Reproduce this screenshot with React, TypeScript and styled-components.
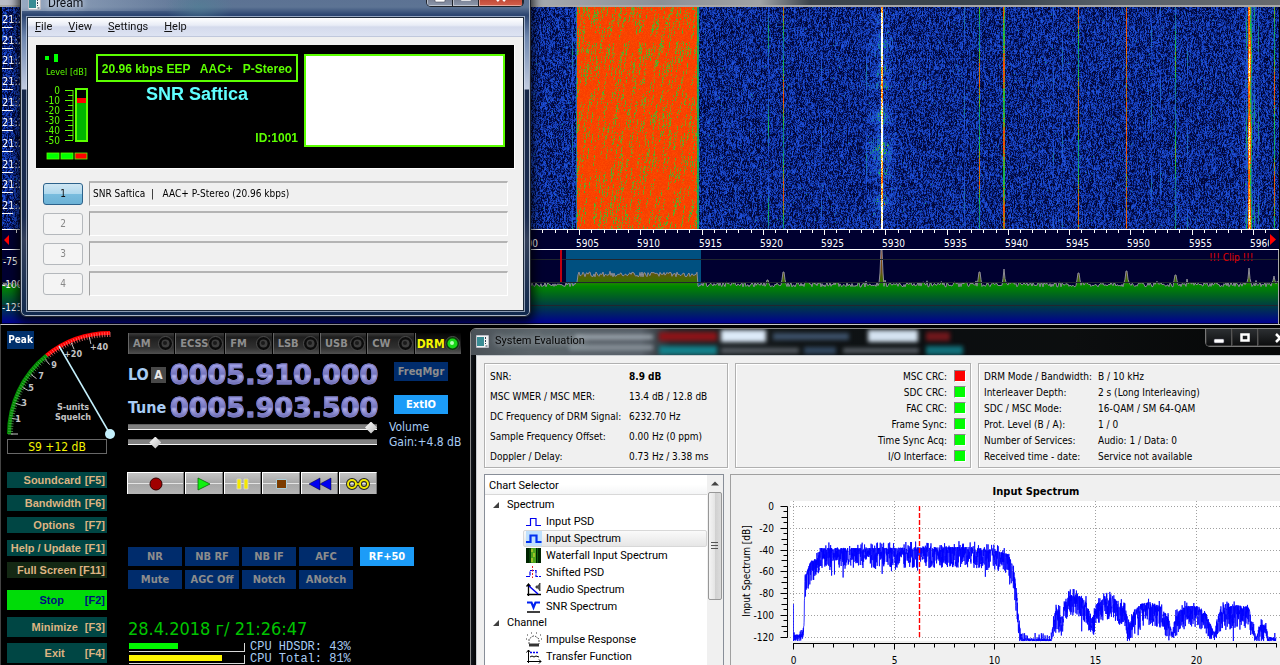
import React, { useLayoutEffect, useRef } from "react";
import styled, { createGlobalStyle, css } from "styled-components";

/* ---------- shared values ---------- */

const ui = `"DejaVu Sans Condensed", "Noto Sans", sans-serif`;
const segoe = `Roboto, "Open Sans", sans-serif`;
const arial = `"Liberation Sans", Arial, sans-serif`;
const lime = "#5cff00";

const GlobalStyle = createGlobalStyle`
  *, *::before, *::after { box-sizing: border-box; }
  html, body { margin: 0; background: #000; }
  body { font-family: ${ui}; font-size: 11px; overflow: hidden; }
  button { font: inherit; padding: 0; margin: 0; border: 0; white-space: nowrap; }
  dl, dd, dt, ul, h2, p { margin: 0; padding: 0; font: inherit; }
  ul { list-style: none; }
  svg { display: block; }
`;

function makeRandom(seed: number) {
  let a = seed;
  return () => {
    a = (a + 0x6d2b79f5) | 0;
    let t = Math.imul(a ^ (a >>> 15), 1 | a);
    t = (t + Math.imul(t ^ (t >>> 7), 61 | t)) ^ t;
    return ((t ^ (t >>> 14)) >>> 0) / 4294967296;
  };
}

/* ---------- desktop ---------- */

const Desktop = styled.main`
  position: relative;
  height: 100vh;
  min-height: 640px;
  overflow: hidden;
  background: #000;
`;

/* ---------- HDSDR: waterfall and spectrum ---------- */

const Sdr = styled.section`
  display: flex;
  flex-direction: column;
  padding: 0 1px 0 2px;
`;

const SdrCaption = styled.header`
  height: 7px;
  margin: 0 -1px 0 -2px;
  border-bottom: 2px solid #a8a8a8;
  background: linear-gradient(90deg, #b9bcc6 0, #a4a8ae 540px, #8c9095 660px, #a0a3a6 760px, #3c444c 810px, #39444d 1000px, #59616a 1120px, #666a6e 100%);
`;

const WaterfallArea = styled.div`
  position: relative;
  height: 222px;
  background: #000030;
`;

const WaterfallCanvas = styled.canvas`
  display: block;
  width: 100%;
  height: 100%;
`;

const TimeMarks = styled.ul`
  position: absolute;
  inset: 5px auto 15px 0;
  display: flex;
  flex-direction: column;
  justify-content: space-between;
  color: #fff;
  font-size: 11px;
  line-height: 15px;
  li::after { content: ""; display: block; width: 11px; height: 1px; background: #fff; }
`;

const palette: [number, number, number, number][] = [
  [0, 0, 0, 34],
  [0.14, 2, 10, 66],
  [0.3, 20, 60, 180],
  [0.42, 34, 84, 226],
  [0.55, 20, 130, 130],
  [0.66, 20, 200, 60],
  [0.75, 160, 140, 20],
  [0.82, 250, 60, 0],
  [0.9, 255, 120, 0],
  [0.96, 255, 235, 90],
  [1, 255, 255, 255],
];

function paletteColor(v: number): [number, number, number] {
  const t = Math.max(0, Math.min(1, v));
  for (let i = 1; i < palette.length; i++) {
    if (t <= palette[i][0]) {
      const a = palette[i - 1];
      const b = palette[i];
      const k = (t - a[0]) / (b[0] - a[0]);
      return [a[1] + (b[1] - a[1]) * k, a[2] + (b[2] - a[2]) * k, a[3] + (b[3] - a[3]) * k];
    }
  }
  return [255, 255, 255];
}

/* x position, strength, width, depth of slow fading */
const carriers: [number, number, number, number][] = [
  [570, 0.36, 1, 0.16], [766, 0.42, 1, 0.18], [781, 0.68, 1, 0.14], [864, 0.32, 1, 0.18],
  [879, 0.97, 2, 0.06], [819, 0.22, 1, 0.24], [962, 0.34, 1, 0.16],
  [977, 0.68, 1, 0.13], [1001, 0.74, 1, 0.08], [1002, 0.72, 1, 0.08], [1051, 0.24, 1, 0.22],
  [1060, 0.28, 1, 0.2], [1076, 0.7, 1, 0.12], [1124, 0.81, 1, 0.05], [1149, 0.26, 1, 0.24],
  [1158, 0.26, 1, 0.2], [1173, 0.58, 1, 0.1], [1185, 0.26, 1, 0.24],
  [1244, 0.44, 1, 0.16], [1246, 0.84, 1, 0.06], [1247, 0.92, 1, 0.05], [1248, 0.78, 1, 0.1],
  [1249, 0.58, 1, 0.08], [1256, 0.38, 1, 0.16], [1252, 0.34, 1, 0.22], [1272, 0.7, 1, 0.12],
];

function paintWaterfall(canvas: HTMLCanvasElement) {
  const w = canvas.clientWidth;
  const h = canvas.clientHeight;
  canvas.width = w;
  canvas.height = h;
  const ctx = canvas.getContext("2d");
  if (!ctx) return;
  const rnd = makeRandom(5910);
  const img = ctx.createImageData(w, h);
  const prev = new Float32Array(w).fill(0.2);
  const hash = (a: number, b: number) => {
    const s = Math.sin(a * 127.1 + b * 311.7) * 43758.5453;
    return s - Math.floor(s);
  };
  /* rows where the strong station is modulated */
  const bursts: [number, number, number][] = [[12, 8, 0.5], [38, 12, 0.9], [62, 8, 0.7], [78, 5, 0.9], [108, 10, 1], [142, 14, 1.2], [164, 8, 0.9], [194, 9, 0.7]];
  for (let y = 0; y < h; y++) {
    let burst = 0.1;
    for (const [by, spread, power] of bursts) burst = Math.max(burst, power * (1 - Math.abs(y - by) / (spread * 1.6)));
    for (let x = 0; x < w; x++) {
      const r = rnd();
      let v = prev[x] * 0.35 + r * 0.3;
      prev[x] = v;
      if (rnd() < 0.012) v += 0.16;
      const d = Math.abs(x - 879.5);
      if (d < 15) {
        const speck = hash(x, Math.floor(y / 3));
        v += (1 - d / 16) * burst * (0.14 + 0.5 * speck) * (0.4 + 0.6 * rnd());
      }
      const d2 = Math.abs(x - 1247);
      if (d2 < 9) v += (1 - d2 / 9) * 0.25 * rnd();
      if (x >= 575 && x < 695) {
        const shifted = x + y / 7;
        const col = Math.floor(shifted);
        const streak = hash(col, Math.floor((y + hash(col, 3) * 12) / 12)) < 0.26;
        v = streak && rnd() < 0.66 ? 0.68 + rnd() * 0.09 : 0.812 + rnd() * 0.03;
      } else if (x >= 695 && x < 697) {
        v = 0.56 + rnd() * 0.1;
      } else if (x === 574) {
        v = 0.4 + rnd() * 0.22;
      }
      for (const [cx, strength, width, fade] of carriers) {
        if (x >= cx && x < cx + width) {
          v = Math.max(v, strength + Math.sin(y / (11 + (cx % 7)) + cx) * fade + (rnd() - 0.5) * 0.14);
        }
      }
      const c = paletteColor(v);
      const i = (y * w + x) * 4;
      img.data[i] = c[0];
      img.data[i + 1] = c[1];
      img.data[i + 2] = c[2];
      img.data[i + 3] = 255;
    }
  }
  ctx.putImageData(img, 0, 0);
}

function Waterfall() {
  const ref = useRef<HTMLCanvasElement>(null);
  useLayoutEffect(() => {
    if (ref.current) paintWaterfall(ref.current);
  }, []);
  return (
    <WaterfallArea>
      <WaterfallCanvas ref={ref} />
      <TimeMarks>
        {Array.from({ length: 10 }, (_, i) => (
          <li key={i}>21:2</li>
        ))}
      </TimeMarks>
    </WaterfallArea>
  );
}

const ScaleBar = styled.div`
  height: 21px;
  border-top: 1px solid #fff;
  border-bottom: 1px solid #fff;
  background: #000030;
  font-size: 11px;
`;

const scaleStart = 578;

function FrequencyScale() {
  const ticks = [];
  for (let f = 5859; f <= 5961; f++) ticks.push(f);
  const labels = [];
  for (let f = 5900; f <= 5960; f += 5) labels.push(f);
  return (
    <ScaleBar>
      <svg width="100%" height="19">
        {ticks.map((f) => (
          <rect key={f} x={Math.round(scaleStart + (f - 5905) * 12.25) - 1} y="0" width="1" height={f % 5 ? 3 : 5} fill="#fff" />
        ))}
        {labels.map((f) => (
          <text key={f} x={Math.round(scaleStart + (f - 5905) * 12.25) - 4} y="17" fill="#fff" fontSize="10" fontFamily={ui}>
            {f}
          </text>
        ))}
        <rect x="1267" y="4" width="12" height="15" fill="#000030" />
        <path d="M7 5v10l-5-5zM1268 4v11l6-5.500z" fill="#f00" />
      </svg>
    </ScaleBar>
  );
}

const SpectrumBox = styled.div`
  height: 74px;
  border-right: 1px solid #aaa;
  background: #000030;
`;

const spectrumPeaks: [number, number][] = [
  [781.5, 272], [879, 250], [880, 250], [977.5, 272], [1002, 269], [1076.5, 273], [1124.500, 271],
  [1173.5, 275], [1185, 279], [1247, 268], [1272, 276], [765.5, 280], [864, 281], [883, 280],
];

function spectrumTrace() {
  const rnd = makeRandom(77);
  let d = "";
  for (let x = 0; x <= 1276; x++) {
    const inBand = x >= 576 && x <= 695;
    let y = (inBand ? 25.5 : 35.5) + (rnd() - 0.5) * 5 - 1;
    if (rnd() < 0.04) y -= 1.5;
    for (const [px, top] of spectrumPeaks) {
      const dist = Math.abs(px - x);
      if (dist < 0.6) y = top - 250;
      else if (dist < 1.7 && top < 277) y = Math.min(y, (top - 250) * 0.3 + 23);
    }
    d += `L${x} ${y.toFixed(1)}`;
  }
  return d.slice(1);
}

function RfSpectrum() {
  const trace = spectrumTrace();
  return (
    <SpectrumBox>
      <svg width="100%" height="73">
        <defs>
          <linearGradient id="rfFill" x1="0" y1="0" x2="0" y2="73" gradientUnits="userSpaceOnUse">
            <stop offset="0" stopColor="#a04010" />
            <stop offset="0.3" stopColor="#6c5010" />
            <stop offset="0.42" stopColor="#3c6c00" />
            <stop offset="0.47" stopColor="#108a00" />
            <stop offset="0.5" stopColor="#008600" />
            <stop offset="0.75" stopColor="#004040" />
            <stop offset="1" stopColor="#000090" />
          </linearGradient>
        </defs>
        <rect x="564" y="0" width="135" height="36" fill="#005080" />
        <path d={`M0 73L${trace}L1276 73Z`} fill="url(#rfFill)" />
        <path d={`M${trace}`} fill="none" stroke="#8c8c98" strokeWidth="1" />
        <path d="M0 9.500H1278M0 32.500H1278M0 55.500H1278" stroke="#20262e" strokeWidth="1" />
        <rect x="558" y="0" width="2" height="32" fill="#c00010" />
        <g fontFamily={ui} fontSize="10" fill="#fff">
          <text x="1" y="15">-75</text>
          <text x="0" y="38">-100</text>
          <text x="0" y="61">-125</text>
        </g>
        <text x="1207" y="11" fontFamily={ui} fontSize="10" fill="#e00000">!!! Clip !!!</text>
      </svg>
    </SpectrumBox>
  );
}

/* ---------- HDSDR: control panel ---------- */

const ControlDeck = styled.section`
  display: grid;
  grid-template-columns: 120px 334px;
  padding: 2px 0 0 7px;
  border-top: 1px solid #c8c8c8;
  border-left: 1px solid #444;
  background: #000;
`;

const MeterColumn = styled.div`
  display: flex;
  flex-direction: column;
  margin-left: -1px;
`;

const MeterWrap = styled.div`
  position: relative;
`;

const PeakButton = styled.button`
  position: absolute;
  left: 0;
  top: 4px;
  width: 27px;
  height: 18px;
  background: #00306c;
  color: #fff;
  font: bold 10px/18px ${ui};
`;

const SReading = styled.output`
  width: 100px;
  height: 15px;
  border: 1px solid #686868;
  color: #f4f400;
  font: 12px/14px ${ui};
  text-align: center;
`;

const FnStack = styled.div<{ $tall?: boolean }>`
  display: flex;
  flex-direction: column;
  justify-content: space-between;
  width: 100px;
  height: ${(p) => (p.$tall ? 73 : 106)}px;
  margin-top: ${(p) => (p.$tall ? 12 : 18)}px;
`;

const FnButton = styled.button<{ $bg?: string; $fg?: string; $tall?: boolean }>`
  display: flex;
  justify-content: flex-end;
  align-items: center;
  height: ${(p) => (p.$tall ? 20 : 16)}px;
  padding-right: 2px;
  background: ${(p) => p.$bg ?? "#004644"};
  color: ${(p) => p.$fg ?? "#dcb482"};
  font: bold 11px/14px ${arial};
  span { flex: 1; text-align: ${(p) => (p.$tall ? "center" : "right")}; }
  kbd { font: inherit; min-width: 24px; text-align: right; }
`;

const meterLabels: [number, number, string][] = [
  [11, 95, "1"], [17, 79, "3"], [24, 64, "5"], [34, 52, "7"], [47, 41, "9"], [66, 30, "+20"], [92, 23, "+40"],
];

function arcPoint(angle: number, r: number) {
  const a = (angle * Math.PI) / 180;
  return `${(103 - Math.cos(a) * r).toFixed(1)} ${(107 - Math.sin(a) * r).toFixed(1)}`;
}

function SMeter() {
  let green = "";
  let red = "";
  for (let a = 0; a <= 90; a += 1.5) {
    const seg = `M${arcPoint(a, 102)}L${arcPoint(a, 97)}`;
    if (a < 52) green += seg;
    else red += seg;
  }
  let major = "";
  for (const a of [0, 9, 18, 28, 37, 49, 60, 67, 78]) major += `M${arcPoint(a, 99)}L${arcPoint(a, 92)}`;
  return (
    <svg width="116" height="112">
      <path d={`M${arcPoint(0, 101)}A101 101 0 0 1 ${arcPoint(51, 101)}`} fill="none" stroke="#008c00" strokeWidth="4" />
      <path d={`M${arcPoint(51, 101)}A101 101 0 0 1 ${arcPoint(90, 101)}`} fill="none" stroke="#ff0000" strokeWidth="4" />
      <path d={green} stroke="#50a850" strokeWidth="0.800" />
      <path d={red} stroke="#ff7070" strokeWidth="0.800" />
      <path d={major} stroke="#c0c0c0" strokeWidth="1" />
      <g fontFamily={ui} fontSize="9" fontWeight="bold" fill="#c4c4c4" textAnchor="middle">
        {meterLabels.map(([x, y, t]) => (
          <text key={t} x={x} y={y}>{t}</text>
        ))}
        <text x="66" y="83">S-units</text>
        <text x="66" y="93">Squelch</text>
      </g>
      <path d="M52 19L103 107" stroke="#c4f0fc" strokeWidth="1.500" />
      <circle cx="103" cy="107" r="5" fill="#c4f0fc" />
    </svg>
  );
}

const RadioColumn = styled.div`
  display: flex;
  flex-direction: column;
  padding-top: 6px;
`;

const ModeBar = styled.div`
  display: grid;
  grid-template-columns: repeat(7, 1fr);
  height: 21px;
`;

const ModeButton = styled.button<{ $on?: boolean }>`
  display: flex;
  align-items: center;
  justify-content: space-between;
  padding: 0 1px 0 ${(p) => (p.$on ? 1 : 4)}px;
  border-right: 1px solid #000;
  border-left: 1px solid #666;
  background: ${(p) => (p.$on ? "linear-gradient(#050505, #222 60%, #5a5a5a)" : "linear-gradient(#3c3c3c, #1e1e1e 20%, #303030 70%, #505050)")};
  color: ${(p) => (p.$on ? "#f6f600" : "#8e8e8e")};
  font: bold ${(p) => (p.$on ? 12 : 11)}px/18px ${ui};
`;

function Led({ on }: { on?: boolean }) {
  return (
    <svg width="15" height="15">
      <circle cx="7.500" cy="7.500" r="7" fill={on ? "#0a3c0a" : "#0c0c0c"} stroke="#4c4c4c" />
      <circle cx="7.500" cy="7.500" r={on ? 5 : 4} fill={on ? "#18d818" : "#3e3e3e"} />
      <circle cx="7" cy="7" r="2" fill={on ? "#b4ffb4" : "#1a1a1a"} />
    </svg>
  );
}

const FreqRow = styled.div`
  display: grid;
  grid-template-columns: 42px 224px 54px;
  align-items: center;
  height: 25px;
  margin-top: 8px;
`;

const FreqLabel = styled.div`
  display: flex;
  align-items: center;
  gap: 2px;
  color: #a8ccf4;
  font: bold 16px/22px ${ui};
`;

const VfoBox = styled.button`
  width: 15px;
  height: 16px;
  background: #484848;
  color: #e8e8e8;
  font: bold 12px/16px ${ui};
`;

const Digits = styled.div`
  font: bold 27px/25px "DejaVu Sans", sans-serif;
  background: linear-gradient(#a0a0e8 3px, #7474bc 12px, #b0b0ec 14px, #6868b0 22px);
  background-clip: text;
  -webkit-background-clip: text;
  -webkit-text-stroke: 1px #7c7cc0;
  color: transparent;
`;

const PanelButton = styled.button<{ $on?: boolean }>`
  align-self: start;
  height: 19px;
  background: ${(p) => (p.$on ? "#1c9cf8" : "#002c6c")};
  color: ${(p) => (p.$on ? "#fff" : "#8c8c8c")};
  font: bold 11px/19px ${ui};
  text-align: center;
`;

const SliderBlock = styled.div`
  display: grid;
  grid-template-columns: 249px 1fr;
  column-gap: 12px;
  align-items: center;
  color: #a8ccf4;
  font: 12px/15px ${ui};
`;

const Slider = styled.input`
  appearance: none;
  width: 100%;
  height: 15px;
  margin: 0;
  background: linear-gradient(transparent 4px, #484848 4px, #808080 5px, #808080 9px, #f4f4f4 9px, #f4f4f4 10px, transparent 10px);
  &::-webkit-slider-thumb {
    appearance: none;
    width: 12px;
    height: 12px;
    background: linear-gradient(135deg, #fff, #b8b8b8);
    clip-path: polygon(50% 0, 100% 50%, 50% 100%, 0 50%);
  }
`;

const Transport = styled.div`
  display: grid;
  grid-template-columns: 57px repeat(5, 1fr);
  gap: 1px;
  width: 250px;
  margin-top: 22px;
  margin-left: -1px;
`;

const TransportButton = styled.button`
  display: flex;
  align-items: center;
  justify-content: center;
  height: 22px;
  border-left: 1px solid #fff;
  border-top: 1px solid #fff;
  border-right: 1px solid #777;
  background: linear-gradient(#c4c4c4, #a8a8a8 46%, #e4e4e4 50%, #a8a8a8 54%, #b4b4b4);
`;

const DspGrid = styled.div`
  display: grid;
  grid-template-columns: repeat(4, 54px) 54px;
  gap: 4px 3px;
  margin-top: 53px;
  & > :nth-child(5) { margin-left: 4px; margin-right: -4px; }
`;

const Clock = styled.time`
  margin-top: 27px;
  color: #00c400;
  font: 18px/25px ${ui};
`;

const CpuRow = styled.div`
  display: grid;
  grid-template-columns: 117px 1fr;
  align-items: center;
  gap: 5px;
  height: 12px;
  color: #a8ccf4;
  font: 12px/12px "Liberation Mono", monospace;
`;

const CpuTrack = styled.div`
  height: 9px;
  margin-left: 1px;
  border-right: 1px solid #d8d8d8;
  border-bottom: 1px solid #d8d8d8;
`;

const CpuFill = styled.div<{ $color: string }>`
  height: 6px;
  background: ${(p) => p.$color};
`;

const modes = ["AM", "ECSS", "FM", "LSB", "USB", "CW", "DRM"];
const dspButtons = ["NR", "NB RF", "NB IF", "AFC", "RF+50", "Mute", "AGC Off", "Notch", "ANotch"];

const transportIcons: [string, React.ReactNode][] = [
  ["Record", <circle key="r" cx="12" cy="9" r="6" fill="#a00000" stroke="#300" />],
  ["Play", <path key="p" d="M6 3v12l12-6z" fill="#10f010" stroke="#0a6a0a" strokeWidth="0.800" />],
  ["Pause", <path key="u" d="M7 4h4v10H7zM14 4h4v10h-4z" fill="#f4e800" stroke="#d8d8d8" strokeWidth="0.800" />],
  ["Stop playback", <path key="s" d="M7.500 4.500h10v9h-10z" fill="#7c3c00" stroke="#aaccd8" />],
  ["Rewind", <path key="w" d="M12 3v12L1 9zM23 3v12L12 9z" fill="#0000f0" stroke="#002" strokeWidth="0.500" />],
  ["Loop", (
    <g key="l" fill="none">
      <path d="M9 9h6" stroke="#222" strokeWidth="3.500" />
      <circle cx="6" cy="9" r="4" stroke="#222" strokeWidth="4" />
      <circle cx="18" cy="9" r="4" stroke="#222" strokeWidth="4" />
      <circle cx="6" cy="9" r="4" stroke="#f0e800" strokeWidth="2" />
      <circle cx="18" cy="9" r="4" stroke="#f0e800" strokeWidth="2" />
      <path d="M9 9h6" stroke="#f0e800" strokeWidth="1.500" />
    </g>
  )],
];

function Controls() {
  return (
    <ControlDeck>
      <MeterColumn>
        <MeterWrap>
          <SMeter />
          <PeakButton>Peak</PeakButton>
        </MeterWrap>
        <SReading>S9 +12 dB</SReading>
        <FnStack>
          <FnButton><span>Soundcard</span><kbd>[F5]</kbd></FnButton>
          <FnButton><span>Bandwidth</span><kbd>[F6]</kbd></FnButton>
          <FnButton><span>Options &nbsp;</span><kbd>[F7]</kbd></FnButton>
          <FnButton><span>Help / Update</span><kbd>[F1]</kbd></FnButton>
          <FnButton $bg="#142814"><span>Full Screen</span><kbd>&nbsp;[F11]</kbd></FnButton>
        </FnStack>
        <FnStack $tall>
          <FnButton $tall $bg="#00dc08" $fg="#00107c"><span>&nbsp; &nbsp; &nbsp;Stop</span><kbd>[F2]</kbd></FnButton>
          <FnButton $tall><span>&nbsp; &nbsp; &nbsp; &nbsp;Minimize</span><kbd>[F3]</kbd></FnButton>
          <FnButton $tall><span>&nbsp; &nbsp; &nbsp; &nbsp;Exit</span><kbd>[F4]</kbd></FnButton>
        </FnStack>
      </MeterColumn>
      <RadioColumn>
        <ModeBar>
          {modes.map((m) => (
            <ModeButton key={m} $on={m === "DRM"} aria-pressed={m === "DRM"}>
              {m}
              <Led on={m === "DRM"} />
            </ModeButton>
          ))}
        </ModeBar>
        <FreqRow>
          <FreqLabel>LO<VfoBox>A</VfoBox></FreqLabel>
          <Digits>0005.910.000</Digits>
          <PanelButton>FreqMgr</PanelButton>
        </FreqRow>
        <FreqRow>
          <FreqLabel>Tune</FreqLabel>
          <Digits>0005.903.500</Digits>
          <PanelButton $on>ExtIO</PanelButton>
        </FreqRow>
        <SliderBlock>
          <Slider id="volume" type="range" min="0" max="100" defaultValue="100" />
          <label htmlFor="volume">Volume</label>
          <Slider id="gain" type="range" min="0" max="100" defaultValue="9" />
          <label htmlFor="gain">Gain:+4.8 dB</label>
        </SliderBlock>
        <Transport>
          {transportIcons.map(([name, icon]) => (
            <TransportButton key={name} aria-label={name}>
              <svg width="24" height="18">{icon}</svg>
            </TransportButton>
          ))}
        </Transport>
        <DspGrid>
          {dspButtons.map((b) => (
            <PanelButton key={b} $on={b === "RF+50"}>{b}</PanelButton>
          ))}
        </DspGrid>
        <Clock>28.4.2018 г/ 21:26:47</Clock>
        <CpuRow>
          <CpuTrack><CpuFill $color="#00f800" style={{ width: "43%" }} /></CpuTrack>
          <span>CPU HDSDR: 43%</span>
        </CpuRow>
        <CpuRow>
          <CpuTrack><CpuFill $color="#fcf400" style={{ width: "81%" }} /></CpuTrack>
          <span>CPU Total: 81%</span>
        </CpuRow>
      </RadioColumn>
    </ControlDeck>
  );
}

/* ---------- window chrome ---------- */

const AppIcon = () => (
  <svg width="13" height="13">
    <rect width="13" height="13" fill="#f4f4f4" stroke="#889" />
    <rect x="1" y="2" width="7" height="9" fill="#3a8c94" />
    <path d="M9.500 2v7M9.500 11h2" stroke="#345" strokeDasharray="2 1" />
  </svg>
);

const CaptionButtons = styled.div<{ $dark?: boolean }>`
  display: flex;
  margin-left: auto;
  border: 1px solid ${(p) => (p.$dark ? "#777" : "#20242c")};
  border-top: 0;
  border-radius: 0 0 5px 5px;
  overflow: hidden;
`;

const CaptionButton = styled.button<{ $close?: boolean; $dark?: boolean }>`
  display: flex;
  align-items: center;
  justify-content: center;
  width: ${(p) => (p.$close ? 44 : 26)}px;
  border-right: 1px solid ${(p) => (p.$dark ? "#555" : "#20242c")};
  box-shadow: inset 1px -1px 0 ${(p) => (p.$dark ? "#333" : "rgba(255,255,255,.45)")};
  background: ${(p) => (p.$dark ? "linear-gradient(#2c2f32, #0b0c0d)" : p.$close ? "linear-gradient(#9c2010, #d4604c)" : "linear-gradient(#556, #8c98ac)")};
`;

function WindowButtons({ dark }: { dark?: boolean }) {
  return (
    <CaptionButtons $dark={dark}>
      <CaptionButton $dark={dark} aria-label="Minimize">
        <svg width="12" height="12"><rect x="1" y="7" width="10" height="4" rx="1" fill="#fff" stroke="#445" strokeWidth="0.600" /></svg>
      </CaptionButton>
      <CaptionButton $dark={dark} aria-label="Maximize">
        <svg width="12" height="12"><rect x="2.500" y="2.500" width="7" height="6" fill="none" stroke="#fff" strokeWidth="2.500" /></svg>
      </CaptionButton>
      <CaptionButton $dark={dark} $close aria-label="Close">
        <svg width="12" height="12"><path d="M2 2l8 8M10 2l-8 8" stroke="#fff" strokeWidth="2.500" /></svg>
      </CaptionButton>
    </CaptionButtons>
  );
}

/* ---------- Dream window ---------- */

const DreamWindow = styled.section`
  position: absolute;
  left: 20px;
  top: -14px;
  width: 511px;
  padding: 0 6px 5px;
  border: 1px solid #20242c;
  border-radius: 6px;
  box-shadow: inset 0 0 0 1px #aab4c4, 0 3px 10px 3px rgba(0, 0, 0, 0.75);
  background:
    radial-gradient(ellipse 34px 20px at 178px 20px, rgba(80, 130, 150, 0.6), transparent),
    linear-gradient(90deg, rgba(210, 222, 238, 0.5), transparent 180px) 0 0 / 100% 24px no-repeat,
    linear-gradient(#5b6f92 0, #5d7494 20px, #2b4470 28px, #6d86ae 50px, #c2cce0 102px, #182848 103px, #1a2c50 230px, #33405a 253px, #10284c 100%);
`;

const DreamCaption = styled.header`
  display: flex;
  height: 30px;
  padding: 0 0 10px 1px;
  align-items: stretch;
  h2 {
    display: flex;
    align-items: center;
    gap: 7px;
    height: 18px;
    margin-top: 7px;
    color: #0c1018;
    font: 12px/18px ${segoe};
    text-shadow: 0 0 5px #dfe7f2, 0 0 8px #dfe7f2;
  }
`;

const DreamClient = styled.div`
  border: 1px solid #1c2838;
  outline: 1px solid rgba(220, 230, 245, 0.6);
  background: #f0f0f0;
`;

const MenuBar = styled.nav`
  display: flex;
  gap: 16px;
  height: 19px;
  padding-left: 7px;
  border-bottom: 1px solid #c0c8dc;
  background: linear-gradient(#fff, #e8ecf6 40%, #d4daec 50%, #dde3f2);
  button { background: none; color: #111; font: 11px/18px ${segoe}; }
`;

const DreamBody = styled.div`
  padding: 8px 8px 14px;
`;

const Display = styled.div`
  display: grid;
  grid-template-columns: 44px 202px 1fr;
  column-gap: 6px;
  height: 124px;
  padding: 9px 9px 0 10px;
  border-right: 1px solid #fff;
  border-bottom: 1px solid #fff;
  background: #000;
  color: ${lime};
  font-family: ${arial};
`;

const StationInfo = styled.div`
  display: flex;
  flex-direction: column;
  height: 93px;
`;

const Bitrate = styled.p`
  height: 28px;
  border: 2px solid ${lime};
  font: bold 12px/26px ${arial};
  text-align: center;
  white-space: pre;
`;

const StationName = styled.p`
  color: #60ffff;
  font: bold 18px/24px ${arial};
  text-align: center;
`;

const StationId = styled.p`
  margin-top: auto;
  font: bold 12px/18px ${arial};
  text-align: right;
`;

const MessageBox = styled.div`
  height: 93px;
  border: 2px solid ${lime};
  background: #fff;
`;

function LevelMeter() {
  const labels = ["0", "-10", "-20", "-30", "-40", "-50"];
  let ticks = "M27 36V86";
  for (let i = 0; i <= 10; i++) ticks += `M27 ${36.5 + i * 5}h${i % 2 ? -5 : -8}`;
  return (
    <svg width="48" height="110" overflow="visible">
      <path d="M-1 2h4v4h-4zM8 0h4v8H8z" fill="#0f0" />
      <text x="0" y="21" fontSize="9" fill={lime} fontFamily={ui}>Level [dB]</text>
      <g fontSize="10" fill={lime} fontFamily={ui} textAnchor="end">
        {labels.map((l, i) => (
          <text key={l} x="14" y={39.5 + i * 10}>{l}</text>
        ))}
      </g>
      <path d={ticks} stroke={lime} fill="none" />
      <rect x="30" y="35" width="11" height="52" fill="#000" stroke={lime} strokeWidth="2" />
      <rect x="31" y="44" width="9" height="5" fill="#f00" />
      <rect x="31" y="49" width="9" height="37" fill="#00b400" />
      <g stroke={lime} strokeWidth="0.800">
        <rect x="1" y="99" width="12" height="6" fill="#0f0" />
        <rect x="15" y="99" width="12" height="6" fill="#0f0" />
        <rect x="29" y="99" width="12" height="6" fill="#f00" />
      </g>
    </svg>
  );
}

const ServiceList = styled.ul`
  display: flex;
  flex-direction: column;
  gap: 5px;
  padding: 12px 7px 0;
`;

const ServiceRow = styled.li`
  display: grid;
  grid-template-columns: 40px 1fr;
  gap: 6px;
  align-items: center;
`;

const ServiceButton = styled.button<{ $on?: boolean }>`
  height: 22px;
  border: 1px solid ${(p) => (p.$on ? "#2c628b" : "#b4b8bc")};
  border-radius: 3px;
  background: ${(p) => (p.$on ? "linear-gradient(#cfe6f3, #aed8ee 50%, #78bcde 52%, #6cb2d6)" : "#f4f4f4")};
  color: ${(p) => (p.$on ? "#111" : "#888")};
  font: 10px/20px ${ui};
`;

const ServiceText = styled.output`
  height: 25px;
  padding-left: 3px;
  border-top: 2px solid #b4b4b4;
  border-left: 1px solid #a0a0a0;
  border-bottom: 1px solid #fff;
  border-right: 1px solid #fff;
  color: #000;
  font: 10px/21px ${ui};
  white-space: pre;
`;

function Dream() {
  return (
    <DreamWindow>
      <DreamCaption>
        <h2><AppIcon />Dream</h2>
        <WindowButtons />
      </DreamCaption>
      <DreamClient>
        <MenuBar>
          {["File", "View", "Settings", "Help"].map((m) => (
            <button key={m}><u>{m[0]}</u>{m.slice(1)}</button>
          ))}
        </MenuBar>
        <DreamBody>
          <Display>
            <LevelMeter />
            <StationInfo>
              <Bitrate>20.96 kbps EEP   AAC+   P-Stereo</Bitrate>
              <StationName>SNR Saftica</StationName>
              <StationId>ID:1001</StationId>
            </StationInfo>
            <MessageBox />
          </Display>
          <ServiceList>
            {["SNR Saftica  |   AAC+ P-Stereo (20.96 kbps)", "", "", ""].map((t, i) => (
              <ServiceRow key={i}>
                <ServiceButton $on={i === 0}>{i + 1}</ServiceButton>
                <ServiceText>{t}</ServiceText>
              </ServiceRow>
            ))}
          </ServiceList>
        </DreamBody>
      </DreamClient>
    </DreamWindow>
  );
}

/* ---------- System Evaluation window ---------- */

const EvalWindow = styled.section`
  position: absolute;
  left: 470px;
  right: -35px;
  top: 328px;
  bottom: -24px;
  display: flex;
  flex-direction: column;
  padding: 0 5px;
  border: 1px solid #888;
  border-radius: 6px 6px 0 0;
  box-shadow: 0 0 0 1px #000;
  background: linear-gradient(90deg, #11161c, #000 6px);
`;

const EvalCaption = styled.header`
  position: relative;
  display: flex;
  flex: none;
  height: 26px;
  margin: 0 -5px;
  padding: 0 11px 8px 5px;
  border-radius: 5px 5px 0 0;
  overflow: hidden;
  background: linear-gradient(90deg, #4a5157, #5c646a 60px, #59616a 170px, #22282c 200px, #101416 330px, #0b0e10 480px, #0c0e0f 600px, #050606);
  h2 {
    position: relative;
    display: flex;
    align-items: center;
    gap: 6px;
    align-self: flex-start;
    height: 24px;
    color: #080808;
    font: 11px/24px ${segoe};
    text-shadow: 0 0 6px #a4acb2, 0 0 9px #a4acb2;
    white-space: nowrap;
  }
`;

/* Controls of the window underneath, seen through the glass caption */
const Glass = styled.div`
  position: absolute;
  inset: 0;
  filter: blur(2px);
  background:
    linear-gradient(#a4adb5, #a4adb5) 104px 6px / 78px 4px no-repeat,
    linear-gradient(#8a939b, #8a939b) 98px 16px / 84px 5px no-repeat,
    linear-gradient(#8c1418, #8c1418) 188px 3px / 58px 9px no-repeat,
    linear-gradient(#14808a, #14808a) 188px 17px / 58px 9px no-repeat,
    linear-gradient(#dceaf8, #dceaf8) 250px 1px / 45px 12px no-repeat,
    linear-gradient(#3c5068, #3c5068) 302px 4px / 76px 7px no-repeat,
    linear-gradient(#585f66, #585f66) 250px 19px / 78px 5px no-repeat,
    linear-gradient(#324860, #324860) 333px 18px / 32px 7px no-repeat,
    linear-gradient(#585f66, #585f66) 372px 19px / 76px 5px no-repeat,
    linear-gradient(#d4e2f0, #d4e2f0) 397px 1px / 50px 12px no-repeat,
    linear-gradient(#70181c, #70181c) 455px 3px / 24px 9px no-repeat,
    linear-gradient(#12707a, #12707a) 455px 17px / 37px 9px no-repeat;
`;

const EvalButtons = styled.div`
  position: relative;
  display: flex;
  margin-left: auto;
`;

const EvalClient = styled.div`
  flex: 1;
  display: flex;
  flex-direction: column;
  gap: 6px;
  padding: 7px 8px 0 7px;
  border: 1px solid #c8ccd0;
  background: #f0f0f0;
  color: #000;
`;

const GroupRow = styled.div`
  display: grid;
  grid-template-columns: 244px 236px 1fr;
  gap: 7px;
`;

const Group = styled.dl<{ $cols: string; $row: number }>`
  display: grid;
  grid-template-columns: ${(p) => p.$cols};
  grid-auto-rows: ${(p) => p.$row}px;
  align-content: center;
  height: 105px;
  padding: 2px 5px 0;
  border: 1px solid #b0b0b0;
  box-shadow: inset 1px 1px 0 #fff, 1px 1px 0 #fff;
  font: 10px/${(p) => p.$row}px ${ui};
  white-space: nowrap;
`;

const StatusLabel = styled.dt`
  text-align: right;
`;

const StatusLed = styled.dd<{ $ok: boolean }>`
  && { margin: 1px 0 0 7px; }
  width: 12px;
  height: 12px;
  border: 1px solid #888;
  border-right-color: #fff;
  border-bottom-color: #fff;
  background: ${(p) => (p.$ok ? "#00fc00" : "#fc0000")};
`;

const LowerRow = styled.div`
  display: grid;
  grid-template-columns: 240px 1fr;
  gap: 6px;
  flex: 1;
`;

const Selector = styled.nav`
  display: grid;
  grid-template-columns: 1fr 16px;
  border: 1px solid #888e98;
  background: #fff;
`;

const SelectorTitle = styled.h2`
  height: 20px;
  margin-bottom: 2px;
  padding-left: 4px;
  border-bottom: 1px solid #d8d8d8;
  background: linear-gradient(#fff 50%, #f4f5f6);
  font: 11px/22px ${segoe};
`;

const TreeGroup = styled.div`
  display: flex;
  align-items: center;
  gap: 7px;
  height: 16px;
  padding-left: 7px;
  font: 11px/16px ${segoe};
`;

const TreeItem = styled.button<{ $on?: boolean }>`
  display: flex;
  align-items: center;
  gap: 4px;
  width: calc(100% - 38px);
  height: 17px;
  margin-left: 38px;
  padding-left: 2px;
  border: 1px solid transparent;
  border-radius: 2px;
  background: none;
  color: #000;
  font: 11px/15px ${segoe};
  ${(p) => p.$on && css`
    border-color: #d8d8d8;
    background: linear-gradient(#fafafa, #e6e6e6);
  `}
`;

const ScrollBar = styled.div`
  display: flex;
  flex-direction: column;
  align-items: center;
  background: #f0f0f0;
  padding-top: 6px;
`;

const ScrollThumb = styled.div`
  display: flex;
  align-items: center;
  justify-content: center;
  width: 14px;
  height: 108px;
  margin-top: 6px;
  border: 1px solid #979797;
  border-radius: 2px;
  background: linear-gradient(90deg, #f4f4f4, #e4e4e4 50%, #d0d0d0 52%, #dcdcdc);
`;

const iconArt: Record<string, React.ReactNode> = {
  "Input PSD": <path d="M0 11.500h4.500v-7h5.500v7h5" fill="none" stroke="#0000f0" strokeWidth="1.200" />,
  "Input Spectrum": (
    <>
      <rect width="16" height="15" fill="#c0e0fc" />
      <path d="M0 11h4.500V4.500h6V11h5" fill="none" stroke="#0030f0" strokeWidth="2.200" />
    </>
  ),
  "Waterfall Input Spectrum": (
    <>
      <rect width="15" height="15" fill="#002400" />
      <rect x="3" width="2" height="15" fill="#084008" />
      <rect x="5" width="5" height="15" fill="#4ca41c" />
      <path d="M6 1v3M8 5v4M6 10v4" stroke="#d0d830" strokeWidth="1.200" />
      <rect x="11" width="1" height="15" fill="#106010" />
    </>
  ),
  "Shifted PSD": (
    <>
      <path d="M0 11.500h4v-6h6v6h5" fill="none" stroke="#0000f0" strokeWidth="1.200" strokeDasharray="4 1" />
      <path d="M6.500 1v12" stroke="#e02020" strokeDasharray="2 1.500" />
    </>
  ),
  "Audio Spectrum": (
    <g fill="none">
      <path d="M2.500 14V2M0.500 4.500l2-2.500 2 2.500M1 12.500h14" stroke="#000" strokeWidth="1.300" />
      <path d="M3 4l9 8" stroke="#0000f0" strokeWidth="1.500" />
      <path d="M10 4h2l2-3v8l-2-3h-2z" fill="#555" stroke="#333" strokeWidth="0.800" />
    </g>
  ),
  "SNR Spectrum": (
    <g fill="none">
      <path d="M1 3.500h4.500l2 5 2-5h4.500" stroke="#0020f0" strokeWidth="2.200" />
      <path d="M1 13h13" stroke="#000" strokeWidth="1.500" />
    </g>
  ),
  "Impulse Response": (
    <g fill="none">
      <path d="M3 13h10" stroke="#333" strokeWidth="3" />
      <path d="M3 12V7l4-3h2l4 3v5" stroke="#555" strokeDasharray="2 1" />
      <path d="M1 3h1M14 3h1M5 1h1M10 1h1M0 7h1M15 7h1" stroke="#333" />
    </g>
  ),
  "Transfer Function": (
    <g fill="none">
      <path d="M2.500 14V1M0.500 3.500l2-2.500 2 2.500M1 12.500h14M13 10.500l2 2-2 2" stroke="#000" />
      <path d="M4 3.500h9" stroke="#0000f0" strokeDasharray="2 1" strokeWidth="1.500" />
      <path d="M4 8l2-1 2 1 2-1 3 1" stroke="#000" />
    </g>
  ),
};

const Twisty = () => (
  <svg width="8" height="8"><path d="M7 1v6H1z" fill="#404040" /></svg>
);

const ChartPanel = styled.figure`
  margin: 0;
  border: 1px solid #a0a0a0;
  background: #f0f0f0;
`;

/* Trace shape: x, upper edge, and how far the noise reaches down */
const envelope: [number, number, number][] = [
  [63, 160, 7], [71, 159, 7], [73, 150, 12], [74, 100, 24], [80, 86, 20], [84, 84, 26], [87, 83, 22],
  [89, 73, 21], [140, 73, 21], [240, 72, 21], [262, 75, 21], [277, 79, 20], [280, 86, 22], [283, 96, 24],
  [286, 120, 30], [288, 150, 16], [291, 163, 6], [320, 164, 6], [322, 150, 12], [325, 132, 26], [329, 134, 26],
  [331, 144, 20], [333, 129, 23], [338, 121, 23], [343, 119, 22], [349, 121, 22], [356, 128, 24],
  [361, 144, 22], [365, 129, 24], [372, 124, 22], [379, 122, 22], [386, 125, 22], [393, 131, 24],
  [399, 150, 18], [403, 136, 24], [410, 129, 23], [419, 127, 23], [429, 131, 23], [437, 142, 24],
  [441, 158, 10], [445, 138, 24], [455, 131, 22], [466, 131, 22], [474, 136, 24], [483, 158, 10],
  [487, 140, 24], [492, 133, 23], [505, 130, 24], [518, 132, 24], [521, 148, 18], [525, 162, 6],
  [529, 150, 16], [535, 149, 18], [537, 162, 6], [546, 163, 6],
];

function inputTrace() {
  const rnd = makeRandom(2018);
  let d = "M62.5 129V166";
  let k = 0;
  for (let x = 63; x <= 545; x += 0.16) {
    while (k < envelope.length - 2 && envelope[k + 1][0] < x) k++;
    const [x0, y0, h0] = envelope[k];
    const [x1, y1, h1] = envelope[k + 1];
    const t = Math.min(1, Math.max(0, (x - x0) / (x1 - x0)));
    const top = y0 + (y1 - y0) * t;
    const h = h0 + (h1 - h0) * t;
    const r = rnd();
    let y = top + r * r * h;
    if (rnd() < 0.03) y += h * 0.8 * rnd();
    if (rnd() < 0.06) y = top - 6 * rnd();
    d += `L${x.toFixed(2)} ${Math.min(166, y).toFixed(1)}`;
  }
  return d;
}

function InputChart() {
  const yOf = (db: number) => Math.round(31 - db * 1.0875) + 0.5;
  const xOf = (khz: number) => Math.round(62 + khz * 20.13) + 0.5;
  const dbs = [0, -20, -40, -60, -80, -100, -120];
  const khz = [0, 5, 10, 15, 20];
  let yTicks = "M56.5 31.5V162.5";
  for (let db = 0; db >= -120; db -= 5) {
    const len = db % 20 === 0 ? 7 : db % 10 === 0 ? 6 : 4;
    yTicks += `M56.5 ${yOf(db)}h${-len}`;
  }
  let xTicks = "M62 168.5H546";
  for (let k = 0; k <= 24; k++) xTicks += `M${xOf(k)} 168.5v${k % 5 ? 4 : 6}`;
  return (
    <svg width="100%" height="190">
      <text x="305" y="20" textAnchor="middle" fontWeight="bold" fontSize="11" fontFamily={ui}>Input Spectrum</text>
      <rect x="59" y="26" width="492" height="140" fill="#fff" />
      <g stroke="#a0a0a0" strokeDasharray="1 2">
        {dbs.map((v) => <path key={v} d={`M59 ${yOf(v)}H551`} />)}
        {khz.map((v) => <path key={v} d={`M${xOf(v)} 26V166`} />)}
      </g>
      <path d={inputTrace()} fill="none" stroke="#0000ff" strokeWidth="0.800" />
      <path d="M188.500 31V162" stroke="#ff0000" strokeWidth="1.400" strokeDasharray="5 2" />
      <path d={yTicks} stroke="#000" fill="none" />
      <path d={xTicks} stroke="#000" fill="none" />
      <g fontFamily={ui} fontSize="10" textAnchor="end">
        {dbs.map((v) => <text key={v} x="43" y={yOf(v) + 3}>{v}</text>)}
      </g>
      <g fontFamily={ui} fontSize="10" textAnchor="middle">
        {khz.map((v) => <text key={v} x={xOf(v)} y="189">{v}</text>)}
      </g>
      <text transform="translate(19 96) rotate(-90)" textAnchor="middle" fontSize="10" fontFamily={ui}>Input Spectrum [dB]</text>
    </svg>
  );
}

const signalRows = [
  ["SNR:", "8.9 dB"],
  ["MSC WMER / MSC MER:", "13.4 dB / 12.8 dB"],
  ["DC Frequency of DRM Signal:", "6232.70 Hz"],
  ["Sample Frequency Offset:", "0.00 Hz (0 ppm)"],
  ["Doppler / Delay:", "0.73 Hz / 3.38 ms"],
];

const statusRows: [string, boolean][] = [
  ["MSC CRC:", false], ["SDC CRC:", true], ["FAC CRC:", true],
  ["Frame Sync:", true], ["Time Sync Acq:", true], ["I/O Interface:", true],
];

const modeRows = [
  ["DRM Mode / Bandwidth:", "B / 10 kHz"],
  ["Interleaver Depth:", "2 s (Long Interleaving)"],
  ["SDC / MSC Mode:", "16-QAM / SM 64-QAM"],
  ["Prot. Level (B / A):", "1 / 0"],
  ["Number of Services:", "Audio: 1 / Data: 0"],
  ["Received time - date:", "Service not available"],
];

const tree: [string, string[]][] = [
  ["Spectrum", ["Input PSD", "Input Spectrum", "Waterfall Input Spectrum", "Shifted PSD", "Audio Spectrum", "SNR Spectrum"]],
  ["Channel", ["Impulse Response", "Transfer Function"]],
];

function SystemEvaluation() {
  return (
    <EvalWindow>
      <EvalCaption>
        <Glass />
        <h2><AppIcon />System Evaluation</h2>
        <EvalButtons><WindowButtons dark /></EvalButtons>
      </EvalCaption>
      <EvalClient>
        <GroupRow>
          <Group $cols="139px 1fr" $row={20}>
            {signalRows.map(([k, v], i) => (
              <React.Fragment key={k}>
                <dt>{k}</dt>
                <dd>{i === 0 ? <b>{v}</b> : v}</dd>
              </React.Fragment>
            ))}
          </Group>
          <Group $cols="1fr 18px" $row={16}>
            {statusRows.map(([k, ok]) => (
              <React.Fragment key={k}>
                <StatusLabel>{k}</StatusLabel>
                <StatusLed $ok={ok} />
              </React.Fragment>
            ))}
          </Group>
          <Group $cols="114px 1fr" $row={16}>
            {modeRows.map(([k, v]) => (
              <React.Fragment key={k}>
                <dt>{k}</dt>
                <dd>{v}</dd>
              </React.Fragment>
            ))}
          </Group>
        </GroupRow>
        <LowerRow>
          <Selector>
            <div>
              <SelectorTitle>Chart Selector</SelectorTitle>
              {tree.map(([group, items]) => (
                <div key={group}>
                  <TreeGroup><Twisty />{group}</TreeGroup>
                  {items.map((item) => (
                    <TreeItem key={item} $on={item === "Input Spectrum"}>
                      <svg width="16" height="15">{iconArt[item]}</svg>
                      {item}
                    </TreeItem>
                  ))}
                </div>
              ))}
            </div>
            <ScrollBar>
              <svg width="8" height="5"><path d="M0 4.500L4 0.500l4 4z" fill="#444" /></svg>
              <ScrollThumb>
                <svg width="8" height="8"><path d="M0 0.500h7M0 3.500h7M0 6.500h7" stroke="#555" /></svg>
              </ScrollThumb>
            </ScrollBar>
          </Selector>
          <ChartPanel>
            <InputChart />
          </ChartPanel>
        </LowerRow>
      </EvalClient>
    </EvalWindow>
  );
}

export default function App() {
  return (
    <Desktop>
      <GlobalStyle />
      <Sdr>
        <SdrCaption />
        <Waterfall />
        <FrequencyScale />
        <RfSpectrum />
      </Sdr>
      <Controls />
      <Dream />
      <SystemEvaluation />
    </Desktop>
  );
}
